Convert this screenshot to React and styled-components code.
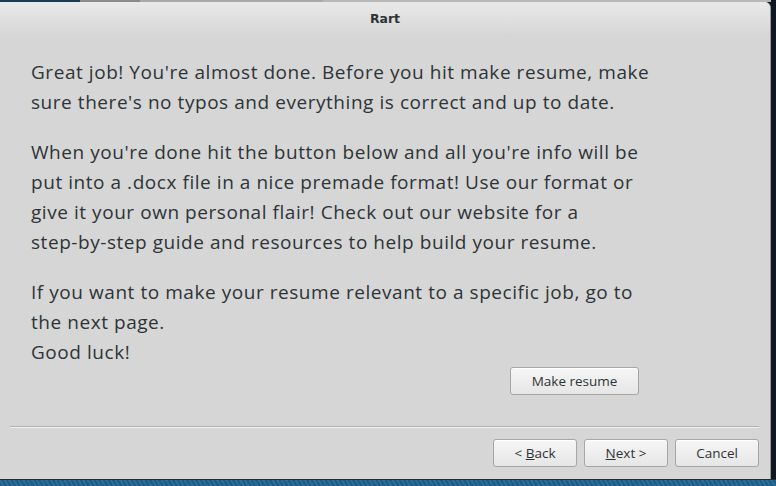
import React from "react";
import styled, { createGlobalStyle } from "styled-components";

const Global = createGlobalStyle`
  html, body {
    margin: 0;
    padding: 0;
    width: 776px;
    height: 486px;
    overflow: hidden;
    background: #0f1820;
  }
`;

const Desktop = styled.div`
  width: 776px;
  height: 486px;
  display: flex;
  flex-direction: column;
  background: #0f1820;
  font-family: "Open Sans", "DejaVu Sans", sans-serif;
`;

const TopStrip = styled.div`
  height: 2px;
  flex: none;
  background: linear-gradient(
    90deg,
    #1b3a55 0 80px,
    #8a8a8a 80px 140px,
    #a9a9a9 140px 323px,
    #b8b8b8 323px 771px,
    #0f1820 771px
  );
`;

const Middle = styled.div`
  display: flex;
  height: 477px;
  flex: none;
`;

const Window = styled.div`
  width: 771px;
  height: 477px;
  display: flex;
  flex-direction: column;
  background: #d6d6d6;
  border-top-right-radius: 6px;
  box-sizing: border-box;
  border-right: 1px solid #9a9a9a;
  overflow: hidden;
`;

const TitleBar = styled.div`
  height: 34px;
  flex: none;
  display: flex;
  align-items: center;
  justify-content: center;
  background: linear-gradient(#e9e9e9, #d6d6d6);
  font-family: "DejaVu Sans", sans-serif;
  font-weight: bold;
  font-size: 12.5px;
  color: #2e3436;
  padding-bottom: 1px;
  box-sizing: border-box;
`;

const Content = styled.div`
  display: flex;
  flex-direction: column;
  padding: 21px 0 0 31px;
`;

const Para = styled.p`
  margin: 0 0 20px;
  font-size: 19px;
  letter-spacing: 0.55px;
  line-height: 30px;
  color: #2e3436;
  white-space: nowrap;
`;

const ActionRow = styled.div`
  display: flex;
  justify-content: flex-end;
  padding-right: 131px;
  margin-top: -20px;
`;

const Button = styled.button`
  width: ${(p) => p.$w || 84}px;
  height: 28px;
  box-sizing: border-box;
  border: 1px solid #a6a6a6;
  border-radius: 3px;
  background: linear-gradient(#f6f6f6, #e6e6e6);
  box-shadow: inset 0 1px 0 #ffffff;
  font-family: "Open Sans", "DejaVu Sans", sans-serif;
  font-size: 13.5px;
  color: #2e3436;
  padding: 0;
  cursor: default;
`;

const Separator = styled.div`
  margin: 31px 11px 0 10px;
  height: 0;
  border-top: 1px solid #b0b0b0;
  border-bottom: 1px solid #f2f2f2;
`;

const Footer = styled.div`
  display: flex;
  justify-content: flex-end;
  gap: 7px;
  padding: 11px 11px 0 0;
`;

const Key = styled.span`
  text-decoration: underline;
`;

const Side = styled.div`
  flex: 1;
  background: #0f1820;
`;

const Stripes = styled.div`
  flex: 1;
  border-top: 1px solid #2a2a2a;
  background: repeating-linear-gradient(
    60deg,
    #1d5a85 0 2px,
    #2b6d99 2px 4px
  );
`;

export default function App() {
  return (
    <>
      <Global />
      <Desktop>
        <TopStrip />
        <Middle>
          <Window>
            <TitleBar>Rart</TitleBar>
            <Content>
              <Para>
                Great job! You're almost done. Before you hit make resume, make
                <br />
                sure there's no typos and everything is correct and up to date.
              </Para>
              <Para>
                When you're done hit the button below and all you're info will be
                <br />
                put into a .docx file in a nice premade format! Use our format or
                <br />
                give it your own personal flair! Check out our website for a
                <br />
                step-by-step guide and resources to help build your resume.
              </Para>
              <Para>
                If you want to make your resume relevant to a specific job, go to
                <br />
                the next page.
                <br />
                Good luck!
              </Para>
              <ActionRow>
                <Button $w={129}>Make resume</Button>
              </ActionRow>
            </Content>
            <Separator />
            <Footer>
              <Button>
                &lt; <Key>B</Key>ack
              </Button>
              <Button>
                <Key>N</Key>ext &gt;
              </Button>
              <Button>Cancel</Button>
            </Footer>
          </Window>
          <Side />
        </Middle>
        <Stripes />
      </Desktop>
    </>
  );
}
